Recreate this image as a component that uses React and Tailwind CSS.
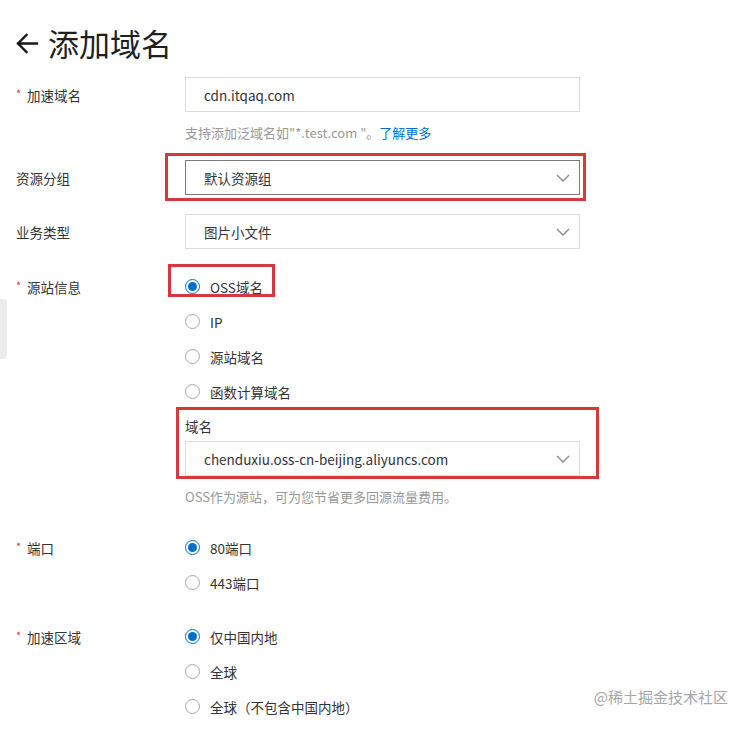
import { useState } from 'react'

const RED = 'border-[#d6393b]'

function Chevron() {
  return (
    <svg width="14" height="8" viewBox="0 0 14 8" fill="none" stroke="#8a8a8a" strokeWidth="1.4">
      <path d="M1 1l6 6 6-6" />
    </svg>
  )
}

function Radio({ checked, label }) {
  return (
    <div className="flex items-center h-[35px]">
      {checked ? (
        <span className="w-[15px] h-[15px] rounded-full border border-[#0070cc] flex items-center justify-center">
          <span className="w-[9px] h-[9px] rounded-full bg-[#0070cc]" />
        </span>
      ) : (
        <span className="w-[15px] h-[15px] rounded-full border border-[#a8a8a8]" />
      )}
      <span className="ml-[10px] text-[13.5px] text-[#333]">{label}</span>
    </div>
  )
}

function Label({ required, children }) {
  return (
    <div className="w-[169px] shrink-0 h-[35px] flex items-center text-[13.5px] text-[#333]">
      {required && <span className="text-[#d6393b] text-[11px] w-[11px] -mt-[3px]">*</span>}
      <span>{children}</span>
    </div>
  )
}

function Select({ value, active }) {
  return (
    <div
      className={`w-[395px] h-[35px] border ${active ? 'border-[#7a7a7a]' : 'border-[#dcdcdc]'} bg-white flex items-center justify-between pl-[18px] pr-[9px] text-[13.5px] text-[#333]`}
    >
      <span>{value}</span>
      <Chevron />
    </div>
  )
}

export default function App() {
  const [origin] = useState('oss')

  return (
    <div className="relative w-[748px] h-[729px] bg-white overflow-hidden font-['Noto_Sans_CJK_SC','Noto_Sans',sans-serif] leading-[20px]">
      {/* 左侧收起把手 */}
      <div className="absolute left-0 top-[299px] w-[7px] h-[60px] bg-[#ececec] rounded-r-sm" />

      <div className="pl-[16px] pt-[22px]">
        {/* 标题 */}
        <div className="flex items-center h-[42px]">
          <svg width="23" height="21" viewBox="0 0 23 21" fill="none" stroke="#1a1a1a" strokeWidth="2.3" strokeLinecap="square">
            <path d="M2 10.5h19M10.5 2l-8.5 8.5 8.5 8.5" />
          </svg>
          <h1 className="ml-[9px] text-[31px] leading-[42px] font-normal text-[#1f1f1f]">添加域名</h1>
        </div>

        {/* 加速域名 */}
        <div className="flex mt-[13px]">
          <Label required>加速域名</Label>
          <div>
            <div className="w-[395px] h-[35px] border border-[#dcdcdc] flex items-center pl-[18px] text-[13.5px] text-[#333]">
              cdn.itqaq.com
            </div>
            <p className="mt-[11px] text-[13px] text-[#999]">
              支持添加泛域名如"*.test.com "。<span className="text-[#0070cc]">了解更多</span>
            </p>
          </div>
        </div>

        {/* 资源分组 */}
        <div className="flex mt-[17px]">
          <Label>资源分组</Label>
          <div className="relative">
            <Select value="默认资源组" active />
            <div className={`absolute -left-[20px] -top-[7px] -right-[6px] -bottom-[6px] border-[3px] ${RED} pointer-events-none`} />
          </div>
        </div>

        {/* 业务类型 */}
        <div className="flex mt-[19px]">
          <Label>业务类型</Label>
          <Select value="图片小文件" />
        </div>

        {/* 源站信息 */}
        <div className="flex mt-[20px]">
          <Label required>源站信息</Label>
          <div>
            <div className="relative">
              <Radio checked={origin === 'oss'} label="OSS域名" />
              <div className={`absolute -left-[17px] -top-[5px] w-[107px] h-[33px] border-[3px] ${RED} pointer-events-none`} />
            </div>
            <Radio label="IP" />
            <Radio label="源站域名" />
            <Radio label="函数计算域名" />

            <div className="relative mt-[7px]">
              <div className="text-[13.5px] text-[#333]">域名</div>
              <div className="mt-[5px]">
                <Select value="chenduxiu.oss-cn-beijing.aliyuncs.com" />
              </div>
              <div className={`absolute -left-[9px] -top-[9px] -right-[19px] -bottom-[3px] border-[3px] ${RED} pointer-events-none`} />
            </div>
            <p className="mt-[11px] text-[13px] text-[#999]">OSS作为源站，可为您节省更多回源流量费用。</p>
          </div>
        </div>

        {/* 端口 */}
        <div className="flex mt-[23px]">
          <Label required>端口</Label>
          <div>
            <Radio checked label="80端口" />
            <Radio label="443端口" />
          </div>
        </div>

        {/* 加速区域 */}
        <div className="flex mt-[19px]">
          <Label required>加速区域</Label>
          <div>
            <Radio checked label="仅中国内地" />
            <Radio label="全球" />
            <Radio label="全球（不包含中国内地）" />
          </div>
        </div>
      </div>

      {/* 水印 */}
      <div className="absolute right-[20px] bottom-[22px] text-[15px] text-[#a6a6a6] [text-shadow:0_0_3px_#fff]">
        @稀土掘金技术社区
      </div>
    </div>
  )
}
